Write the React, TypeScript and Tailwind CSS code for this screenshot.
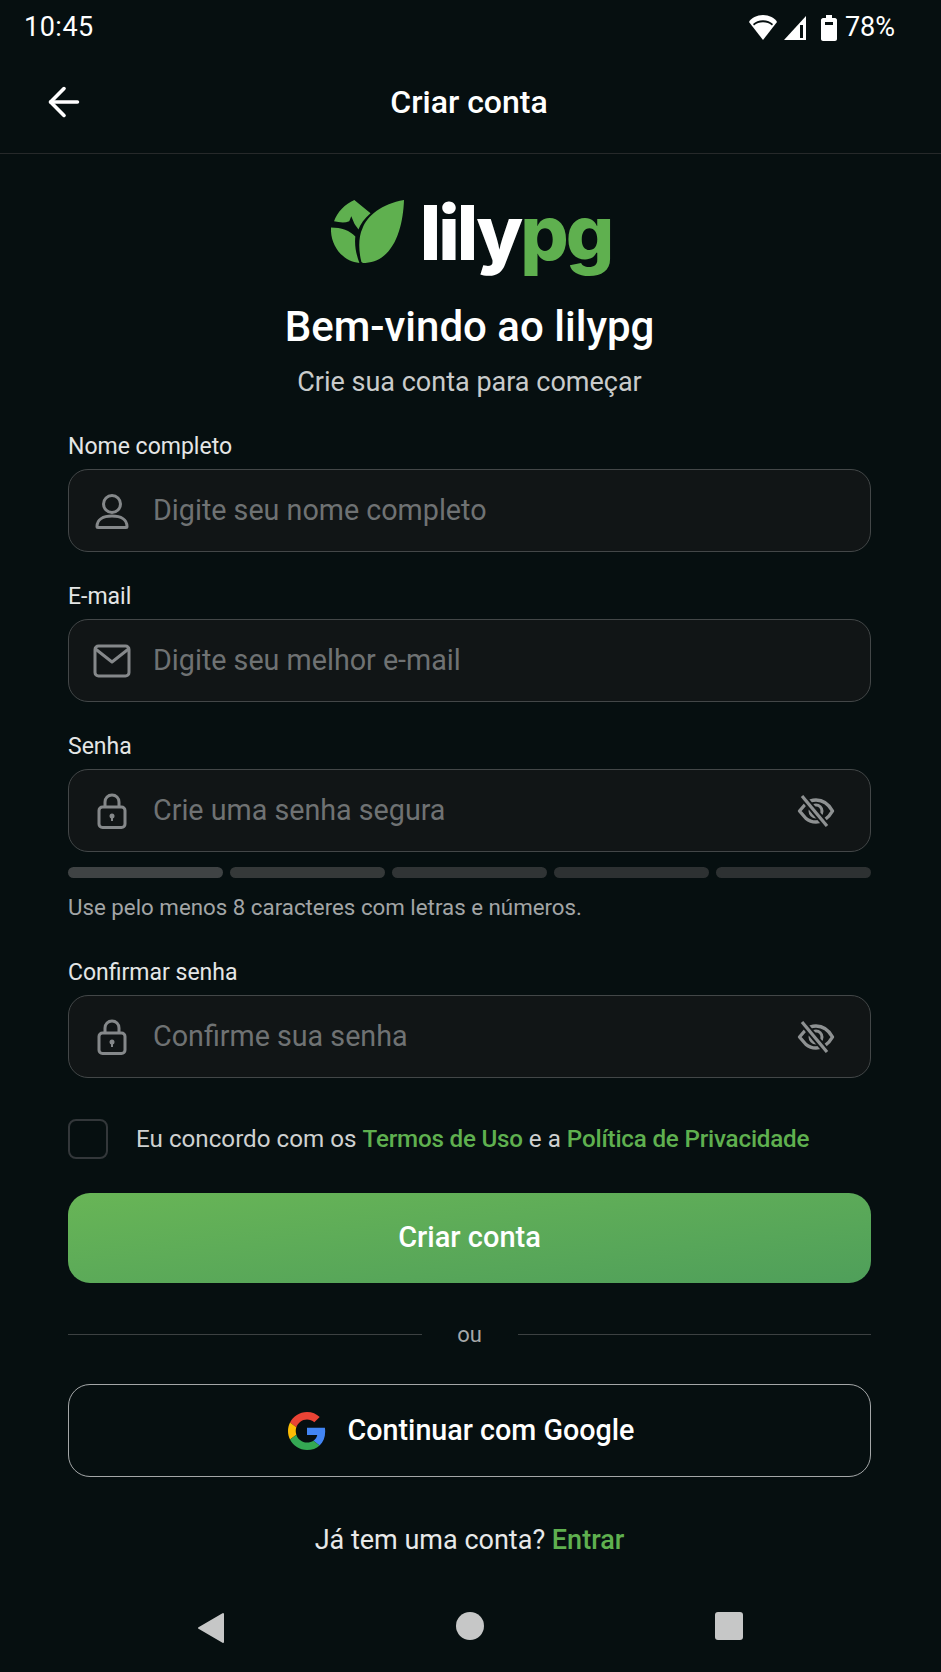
import { ArrowLeft } from 'lucide-react'
import type { ReactNode } from 'react'

function UserIcon() {
  return (
    <svg width="34" height="36" viewBox="0 0 34 36" fill="none" stroke="currentColor" strokeWidth="3">
      <circle cx="17" cy="11" r="8.5" />
      <path d="M2 33.5C2 26.5 8 23 17 23C26 23 32 26.5 32 33.5C32 34 31.6 34.5 31 34.5H3C2.4 34.5 2 34 2 33.5Z" strokeLinejoin="round" />
    </svg>
  )
}

function MailIcon() {
  return (
    <svg width="38" height="34" viewBox="0 0 38 34" fill="none" stroke="currentColor" strokeWidth="3" strokeLinejoin="round" strokeLinecap="round">
      <rect x="2" y="2" width="34" height="30" rx="3.5" />
      <path d="M2.5 5L19 18L35.5 5" />
    </svg>
  )
}

function LockIcon() {
  return (
    <svg width="30" height="36" viewBox="0 0 30 36" fill="none" stroke="currentColor" strokeWidth="3">
      <rect x="2" y="14" width="26" height="20.5" rx="3.5" />
      <path d="M8 14V9C8 5 11 2 15 2C19 2 22 5 22 9V14" />
      <circle cx="15" cy="23" r="2.5" fill="currentColor" stroke="none" />
      <path d="M15 24V28" strokeWidth="2" />
    </svg>
  )
}

function EyeOffIcon() {
  return (
    <svg width="38" height="32" viewBox="0 0 38 32" fill="none" className="text-[#8e9192]">
      <path d="M2.5 16L9 8.5C12 6 15.5 5 19 5C25 5 31 8 35.5 16C31 24 25 27 19 27C15.5 27 12 26 9 23.5Z" stroke="currentColor" strokeWidth="3.4" strokeLinejoin="round" />
      <circle cx="19" cy="16" r="6" stroke="currentColor" strokeWidth="3" />
      <path d="M5 1L30 31" stroke="#111516" strokeWidth="7" />
      <path d="M5 1L30 31" stroke="currentColor" strokeWidth="3.2" />
    </svg>
  )
}

function Field({
  label,
  placeholder,
  icon,
  eye = false,
}: {
  label: string
  placeholder: string
  icon: ReactNode
  eye?: boolean
}) {
  return (
    <div>
      <label className="block text-[23px] leading-[26px] text-[#e4e6e6]">{label}</label>
      <div className="mt-[9px] flex h-[83px] items-center rounded-[20px] border-[1.5px] border-[#434748] bg-[#111516] pl-[24px] pr-[35px]">
        <span className="flex w-[38px] justify-center text-[#85888a]">{icon}</span>
        <span className="ml-[22px] flex-1 text-[28.7px] text-[#6f7273]">{placeholder}</span>
        {eye && <EyeOffIcon />}
      </div>
    </div>
  )
}

function Leaf() {
  return (
    <svg width="73" height="64" viewBox="0 0 72 63" fill="#5fb04f">
      <path d="M72 0C71 28 62 60 34 62C32 62 31 62 30 61C27 50 27 36 31 28C36 15 50 4 72 0Z" />
      <path d="M23 0L39 13C33 18 29 24 27 29C26 27 24 25 23 23L20 16L18 21C13 23 8 22 3 21C6 12 14 4 23 0Z" />
      <path d="M0 27C10 27 19 30 24 36C23 45 25 54 28 62C12 61 -1 45 0 27Z" />
    </svg>
  )
}

function GoogleLogo() {
  return (
    <svg width="38" height="38" viewBox="0 0 48 48">
      <path fill="#EA4335" d="M24 9.5c3.54 0 6.71 1.22 9.21 3.6l6.85-6.85C35.9 2.38 30.47 0 24 0 14.62 0 6.51 5.38 2.56 13.22l7.98 6.19C12.43 13.72 17.74 9.5 24 9.5z" />
      <path fill="#4285F4" d="M46.98 24.55c0-1.57-.15-3.09-.38-4.55H24v9.02h12.94c-.58 2.96-2.26 5.48-4.78 7.18l7.73 6c4.51-4.18 7.09-10.36 7.09-17.65z" />
      <path fill="#FBBC05" d="M10.53 28.59c-.48-1.45-.76-2.99-.76-4.59s.27-3.14.76-4.59l-7.98-6.19C.92 16.46 0 20.12 0 24c0 3.88.92 7.54 2.56 10.78l7.97-6.19z" />
      <path fill="#34A853" d="M24 48c6.48 0 11.93-2.13 15.89-5.81l-7.73-6c-2.15 1.45-4.92 2.3-8.16 2.3-6.26 0-11.57-4.22-13.47-9.91l-7.98 6.19C6.51 42.62 14.62 48 24 48z" />
    </svg>
  )
}

export default function App() {
  return (
    <div className="flex h-[1672px] w-[941px] flex-col overflow-hidden bg-[#060f10] font-['Roboto',sans-serif] text-white">
      {/* status bar */}
      <div className="flex h-[55px] items-center justify-between pl-[24px] pr-[46px]">
        <span className="text-[27px] tracking-[0.5px]">10:45</span>
        <div className="flex items-center gap-[5px]">
          <svg width="30" height="26" viewBox="0 0 30 26" fill="white">
            <path d="M15 25L1 7C3 3 9 0 15 0C21 0 27 3 29 7L15 25Z" />
            <path d="M5 9C7.5 6.5 11 5.2 15 5.2C19 5.2 22.5 6.5 25 9L24 10.5C21.5 8.2 18.5 7.2 15 7.2C11.5 7.2 8.5 8.2 6 10.5Z" fill="#060f10" />
          </svg>
          <svg width="24" height="26" viewBox="0 0 24 26">
            <path d="M23 1V25H1Z" fill="white" />
            <rect x="17" y="10" width="3" height="13" fill="#060f10" />
          </svg>
          <svg width="16" height="26" viewBox="0 0 16 26" fill="white" className="ml-[9px] mr-[3px]">
            <path d="M5 0H11V3H14C15 3 16 4 16 5V24C16 25 15 26 14 26H2C1 26 0 25 0 24V5C0 4 1 3 2 3H5Z" />
            <rect x="4" y="7" width="8" height="3" fill="#060f10" />
          </svg>
          <span className="text-[27px]">78%</span>
        </div>
      </div>

      {/* header */}
      <div className="relative flex h-[99px] items-center justify-center border-b border-[#26292a] pb-[4px] pr-[3px]">
        <ArrowLeft size={46} strokeWidth={1.9} className="absolute left-[41px] top-[24px]" />
        <h1 className="text-[32px] font-medium">Criar conta</h1>
      </div>

      <main className="flex flex-1 flex-col pl-[68px] pr-[70px]">
        <div className="mt-[42px] flex items-center justify-center gap-[16px] pl-[3px]">
          <Leaf />
          <span className="font-['Inter',sans-serif] text-[76px] font-extrabold leading-[72px] tracking-[-3px]">
            lily<span className="text-[#5fb04f]">pg</span>
          </span>
        </div>

        <h2 className="mt-[36px] text-center text-[42px] font-medium leading-[46px]">Bem-vindo ao lilypg</h2>
        <p className="mt-[16px] text-center text-[27px] leading-[32px] text-[#c9cbcb]">Crie sua conta para começar</p>

        <div className="mt-[36px] flex flex-col gap-[32px]">
          <Field label="Nome completo" placeholder="Digite seu nome completo" icon={<UserIcon />} />
          <Field label="E-mail" placeholder="Digite seu melhor e-mail" icon={<MailIcon />} />
          <div>
            <Field label="Senha" placeholder="Crie uma senha segura" icon={<LockIcon />} eye />
            <div className="mt-[15px] grid grid-cols-5 gap-[7px]">
              <div className="h-[11px] rounded-full bg-[#3f4344]" />
              <div className="h-[11px] rounded-full bg-[#353939]" />
              <div className="h-[11px] rounded-full bg-[#303435]" />
              <div className="h-[11px] rounded-full bg-[#2d3132]" />
              <div className="h-[11px] rounded-full bg-[#2d3132]" />
            </div>
            <p className="mt-[16px] text-[22.3px] leading-[26px] text-[#a2a5a6]">
              Use pelo menos 8 caracteres com letras e números.
            </p>
          </div>
          <div className="mt-[8px]">
            <Field label="Confirmar senha" placeholder="Confirme sua senha" icon={<LockIcon />} eye />
          </div>
        </div>

        <div className="mt-[41px] flex items-center gap-[28px]">
          <span className="h-[40px] w-[40px] rounded-[8px] border-2 border-[#33373a]" />
          <p className="text-[24.2px] text-[#cfd1d1]">
            Eu concordo com os{' '}
            <span className="font-medium tracking-[-0.2px] text-[#5fb04f]">Termos de Uso</span> e a{' '}
            <span className="font-medium tracking-[-0.2px] text-[#5fb04f]">Política de Privacidade</span>
          </p>
        </div>

        <button className="mt-[34px] h-[90px] rounded-[22px] bg-gradient-to-br from-[#68b556] to-[#4f9f5a] text-[29px] font-medium">
          Criar conta
        </button>

        <div className="mt-[35px] flex items-center">
          <div className="h-[1.5px] flex-1 bg-[#3c4142]" />
          <span className="w-[96px] text-center text-[22px] text-[#a5a8a9]">ou</span>
          <div className="h-[1.5px] flex-1 bg-[#3c4142]" />
        </div>

        <button className="mt-[33px] flex h-[93px] items-center justify-center gap-[22px] rounded-[22px] border-[1.5px] border-[#a4a7a8] pr-[17px] text-[28.7px] font-medium">
          <GoogleLogo />
          Continuar com Google
        </button>

        <p className="mt-[43px] text-center text-[27px] text-[#e8e9e9]">
          Já tem uma conta? <span className="font-medium text-[#5fb04f]">Entrar</span>
        </p>
      </main>

      {/* android nav */}
      <div className="flex h-[90px] items-start justify-center gap-[231px] pr-[2px] pt-[30px]">
        <svg width="28" height="32" viewBox="0 0 28 32" fill="#c6c7c7" stroke="#c6c7c7" strokeWidth="2" strokeLinejoin="round">
          <path d="M26 2V30L2 16Z" />
        </svg>
        <span className="h-[28px] w-[28px] rounded-full bg-[#c6c7c7]" />
        <span className="h-[28px] w-[28px] rounded-[3px] bg-[#c6c7c7]" />
      </div>
    </div>
  )
}
